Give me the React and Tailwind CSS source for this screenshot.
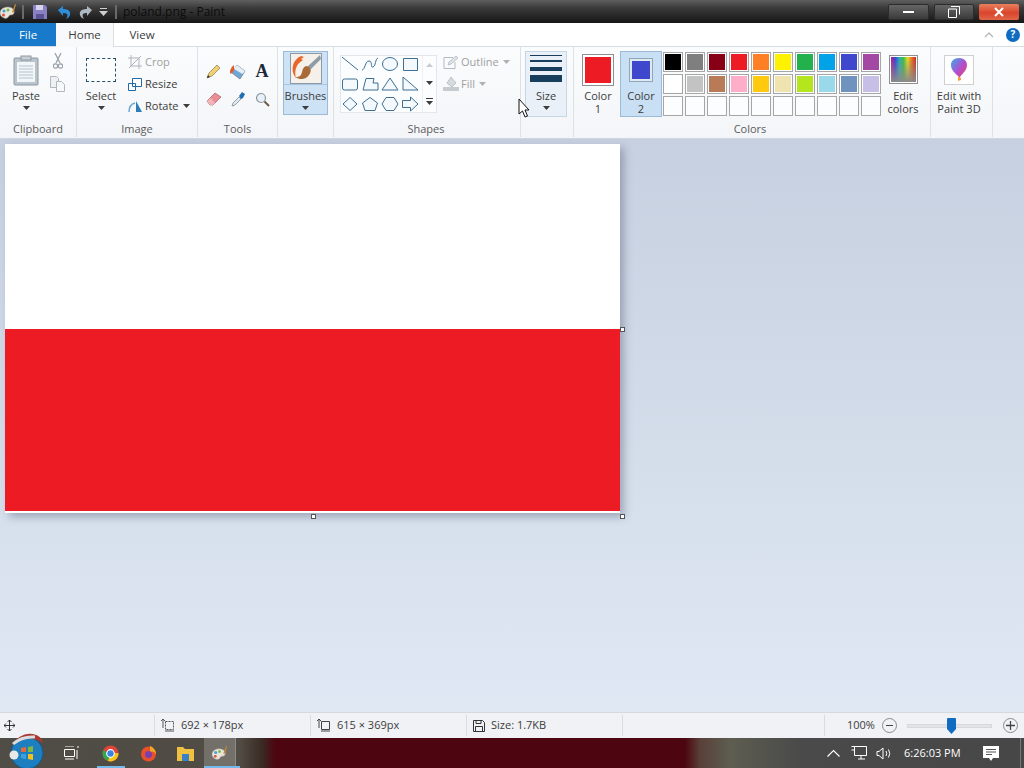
import React from 'react';

const row1 = ['#000000', '#7f7f7f', '#880015', '#ed1c24', '#ff7f27', '#fff200', '#22b14c', '#00a2e8', '#3f48cc', '#a349a4'];
const row2 = ['#ffffff', '#c3c3c3', '#b97a57', '#ffaec9', '#ffc90e', '#efe4b0', '#b5e61d', '#99d9ea', '#7092be', '#c8bfe7'];
const row3 = Array(10).fill('transparent');

function Caret({ color = '#3c3c3c' }) {
  return (
    <svg width="7" height="4" viewBox="0 0 7 4" className="shrink-0">
      <path d="M0 0h7L3.5 4z" fill={color} />
    </svg>
  );
}

function PaletteIcon({ size = 18 }) {
  return (
    <svg width={size} height={size} viewBox="0 0 18 18">
      <path d="M1 10c0-4 4-6 8-6s7 3 6 6-4 1-5 3-3 3-5 2-4-2-4-5z" fill="#e8e4d8" stroke="#9a9484" strokeWidth=".6" />
      <circle cx="5" cy="8" r="1.6" fill="#4a9fd8" />
      <circle cx="9" cy="7" r="1.5" fill="#6dbb4b" />
      <circle cx="4.500" cy="12" r="1.500" fill="#d9534f" />
      <path d="M13 9l3-8 1 .5-2.500 8z" fill="#c98a3a" />
    </svg>
  );
}

function Shape({ d }) {
  return (
    <svg width="20" height="20" viewBox="0 0 20 20">
      <path d={d} fill="#f4f9fd" stroke="#3f6f92" strokeWidth="1" strokeLinejoin="round" />
    </svg>
  );
}

const shapes = [
  'M2 3L18 16',
  'M2 16C5 16 5 7 9 7S10 14 13 13 15 5 18 4',
  'M2.500 10a7.500 6.500 0 1 0 15 0a7.500 6.500 0 1 0-15 0z',
  'M3.500 4.500h14v12h-14z',
  'M2.500 7q0-2 2-2h11q2 0 2 2v7q0 2-2 2h-11q-2 0-2-2z',
  'M3 16L6 4.500h8l-1 4.500h5v7z',
  'M10 4L18 16H2z',
  'M3 3L18 16H3z',
  'M10 3.500L17 10 10 16.500 3 10z',
  'M10 3.500L17.500 9 15 16.500H5L2.500 9z',
  'M6 3.500h8L18 10l-4 6.500H6L2 10z',
  'M2.500 6.500h8V3L18 10l-7.500 7v-3.500h-8z',
];

function BigButton({ width, children, lines, caret }) {
  return (
    <div className="flex flex-col items-center pt-[8px]" style={{ width }}>
      <div className="h-[30px] w-full flex items-center justify-center">{children}</div>
      <div className="mt-[4px] text-center leading-[13px] whitespace-nowrap">
        {lines.map((l) => (
          <div key={l}>{l}</div>
        ))}
      </div>
      {caret && (
        <div className="mt-[4px]">
          <Caret />
        </div>
      )}
    </div>
  );
}

function Group({ label, width, labelPad = 0, children }) {
  return (
    <div className="flex flex-col shrink-0 h-[90px] border-r border-[#dde1e6]" style={{ width }}>
      <div className="h-[76px] flex">{children}</div>
      <div className="h-[14px] mt-[-1px] text-center leading-[14px] text-[#5c5c5c]" style={{ paddingRight: labelPad }}>
        {label}
      </div>
    </div>
  );
}

function SmallRow({ icon, text, dim, caret }) {
  return (
    <div className={`h-[22px] flex items-center gap-[2px] whitespace-nowrap ${dim ? 'text-[#a0a0a0]' : ''}`}>
      <span className="w-[16px] h-[16px] flex items-center justify-center">{icon}</span>
      {text}
      {caret && <span className="ml-[2px]"><Caret color={dim ? '#b0b0b0' : '#3c3c3c'} /></span>}
    </div>
  );
}

function Tool({ children }) {
  return <div className="w-[24px] h-[28px] flex items-center justify-center">{children}</div>;
}

function Swatch({ color }) {
  return (
    <div className="w-[20px] h-[20px] border border-[#a6a6a6] p-[1px] bg-white/70">
      <div className="w-full h-full" style={{ background: color }} />
    </div>
  );
}

function Handle() {
  return <div className="absolute w-[5px] h-[5px] bg-white border border-[#555]" />;
}

function StatusCell({ width, children }) {
  return (
    <div className="h-[21px] flex items-center gap-[6px] border-r border-[#d9dce0] pl-[6px] shrink-0" style={{ width }}>
      {children}
    </div>
  );
}

export default function App() {
  return (
    <div
      className="w-[1024px] h-[768px] flex flex-col overflow-hidden text-[11px] text-[#3c3c3c] relative"
      style={{ fontFamily: '"Open Sans", "Noto Sans", sans-serif' }}
    >
      {/* title bar */}
      <div className="h-[23px] shrink-0 flex items-center bg-[linear-gradient(to_bottom,#5f5f5f,#3a3a3a_35%,#161616)]">
        <div className="w-[18px] ml-[-1px] flex"><PaletteIcon /></div>
        <div className="w-[2px] h-[14px] bg-[#6a6a6a] ml-[5px]" />
        <svg width="16" height="16" viewBox="0 0 16 16" className="ml-[8px]">
          <path d="M1 1h12l2 2v12H1z" fill="#8a80c4" />
          <path d="M4 1h7v5H4z" fill="#d8d4ee" />
          <path d="M4 10h8v5H4z" fill="#5a5294" />
        </svg>
        <svg width="16" height="16" viewBox="0 0 16 16" className="ml-[8px]">
          <path d="M2 6l5-4v3c5 0 8 2 7 6-.5 2-2 3-4 4 1-2 2-3 1-5-1-1-2-1-4-1v3z" fill="#2e8fd8" />
        </svg>
        <svg width="16" height="16" viewBox="0 0 16 16" className="ml-[6px]">
          <path d="M14 6L9 2v3C4 5 1 7 2 11c.5 2 2 3 4 4-1-2-2-3-1-5 1-1 2-1 4-1v3z" fill="#aeb8c0" />
        </svg>
        <svg width="9" height="8" viewBox="0 0 9 8" className="ml-[5px]">
          <path d="M1 0h7v1H1zM0 3h9L4.500 8z" fill="#cfcfcf" />
        </svg>
        <div className="w-[2px] h-[14px] bg-[#6a6a6a] ml-[7px]" />
        <div className="ml-[6px] text-[12px] text-[#0c0c0c]">poland.png - Paint</div>
        <div className="ml-auto flex gap-[5px] pr-[5px] h-[16px]">
          <div className="w-[41px] border border-[#2c2c2c] rounded-[2px] bg-[linear-gradient(to_bottom,#666,#3a3a3a)] flex items-center justify-center">
            <div className="w-[11px] h-[2px] bg-white" />
          </div>
          <div className="w-[40px] border border-[#2c2c2c] rounded-[2px] bg-[linear-gradient(to_bottom,#666,#3a3a3a)] flex items-center justify-center">
            <svg width="12" height="12" viewBox="0 0 12 12">
              <path d="M3 .5h8.500v8M.5 3h8v8.500h-8z" fill="none" stroke="#fff" strokeWidth="1" />
            </svg>
          </div>
          <div className="w-[40px] rounded-[2px] bg-[linear-gradient(to_bottom,#e9805f,#d9452c_55%,#e0664a)] flex items-center justify-center">
            <svg width="10" height="10" viewBox="0 0 10 10">
              <path d="M1 1l8 8M9 1l-8 8" stroke="#fff" strokeWidth="2" />
            </svg>
          </div>
        </div>
      </div>

      {/* tabs */}
      <div className="h-[24px] shrink-0 flex bg-white border-b border-[#d9dde2] text-[11.500px]">
        <div className="w-[56px] h-[23px] bg-[#1979ca] text-white flex items-center justify-center">File</div>
        <div className="w-[58px] h-[24px] bg-[#f8f9fa] border-r border-[#d9dde2] flex items-center justify-center">Home</div>
        <div className="w-[56px] flex items-center justify-center">View</div>
        <div className="ml-auto flex items-center gap-[12px] pr-[4px]">
          <svg width="10" height="6" viewBox="0 0 10 6">
            <path d="M1 5l4-4 4 4" fill="none" stroke="#b4b8bd" strokeWidth="1.300" />
          </svg>
          <div className="w-[14px] h-[14px] rounded-full bg-[#0f6cc0] text-white text-[10px] font-bold flex items-center justify-center">?</div>
        </div>
      </div>

      {/* ribbon */}
      <div className="h-[91px] shrink-0 flex bg-[linear-gradient(to_bottom,#fbfcfd,#f3f5f8)]">
        <Group label="Clipboard" width={77}>
          <div className="ml-[12px]">
            <BigButton width={28} lines={['Paste']} caret>
              <svg width="26" height="31" viewBox="0 0 26 31">
                <rect x="1" y="3" width="24" height="27" rx="1" fill="#b9c4cd" stroke="#8e99a3" />
                <rect x="4" y="7" width="18" height="20" fill="#f3f6f8" />
                <path d="M6 11h14M6 14h14M6 17h14M6 20h14M6 23h14" stroke="#b5c2cd" />
                <rect x="8" y="1" width="10" height="4" fill="#c8ced4" stroke="#8e99a3" />
              </svg>
            </BigButton>
          </div>
          <div className="ml-[10px] flex flex-col items-center pt-[6px] gap-[7px]">
            <svg width="10" height="16" viewBox="0 0 10 16">
              <path d="M2 0l5 10M8 0L3 10" stroke="#9aa3aa" strokeWidth="1.300" />
              <circle cx="2.500" cy="13" r="2.200" fill="none" stroke="#9aa3aa" strokeWidth="1.200" />
              <circle cx="7.500" cy="13" r="2.200" fill="none" stroke="#9aa3aa" strokeWidth="1.200" />
            </svg>
            <svg width="15" height="16" viewBox="0 0 15 16">
              <path d="M.5.500h6l2 2v9h-8z" fill="#eef1f4" stroke="#b0b8bf" />
              <path d="M6.500 5.500h5l3 3v7h-8z" fill="#f6f8fa" stroke="#b0b8bf" />
            </svg>
          </div>
        </Group>

        <Group label="Image" width={121}>
          <div className="ml-[9px]">
            <BigButton width={30} lines={['Select']} caret>
              <div className="w-[30px] h-[24px] border border-dashed border-[#24506e] bg-white/60" />
            </BigButton>
          </div>
          <div className="ml-[11px] flex flex-col pt-[4px]">
            <SmallRow
              dim
              text="Crop"
              icon={
                <svg width="14" height="14" viewBox="0 0 14 14">
                  <path d="M3 0v11h11M0 3h11v11M1 13L13 1" fill="none" stroke="#adb4ba" />
                </svg>
              }
            />
            <SmallRow
              text="Resize"
              icon={
                <svg width="14" height="13" viewBox="0 0 14 13">
                  <path d="M4.500.500h9v8h-9zM.5 5.500h7v7h-7z" fill="#fff" stroke="#1f6aa8" />
                </svg>
              }
            />
            <SmallRow
              text="Rotate"
              caret
              icon={
                <svg width="15" height="13" viewBox="0 0 15 13">
                  <path d="M8 1l6 11H8z" fill="#2e7cb8" />
                  <path d="M1 12C1 7 3 4 7 3" fill="none" stroke="#6fa8d0" strokeWidth="1.500" />
                </svg>
              }
            />
          </div>
        </Group>

        <Group label="Tools" width={80}>
          <div className="ml-[4px] mt-[10px] w-[72px] h-[56px] flex flex-wrap content-start">
            <Tool>
              <svg width="16" height="16" viewBox="0 0 16 16">
                <path d="M1 15l2-5 8-8 3 3-8 8z" fill="#efd074" stroke="#8c7a3c" strokeWidth=".7" />
                <path d="M1 15l1-3 2 2z" fill="#333" />
              </svg>
            </Tool>
            <Tool>
              <svg width="18" height="17" viewBox="0 0 18 17">
                <path d="M8 2l8 6-5 8-8-6z" fill="#6fa7d6" stroke="#6a7680" strokeWidth=".7" />
                <path d="M8 2l8 6-2.500 3L5 6z" fill="#e6eef4" />
                <path d="M5 2C1 5 0 10 2 11l3-4z" fill="#e35a2a" />
              </svg>
            </Tool>
            <Tool>
              <span className="text-[18px] font-bold leading-none text-[#1b2a3a]" style={{ fontFamily: '"Liberation Serif", serif' }}>A</span>
            </Tool>
            <Tool>
              <svg width="16" height="14" viewBox="0 0 16 14">
                <path d="M1 9l8-8 6 4-8 8H4z" fill="#ea8c93" stroke="#a85f66" strokeWidth=".7" />
                <path d="M1 9l3 4h3l2-2-4-5z" fill="#f1b4b9" />
              </svg>
            </Tool>
            <Tool>
              <svg width="15" height="16" viewBox="0 0 15 16">
                <path d="M1 15l1-3 6-6 2 2-6 6z" fill="#dfe8ee" stroke="#6f8290" strokeWidth=".7" />
                <path d="M8 5l3-4 3 2-2 4-2 1z" fill="#1f6fb0" />
              </svg>
            </Tool>
            <Tool>
              <svg width="15" height="15" viewBox="0 0 15 15">
                <circle cx="6" cy="6" r="4.500" fill="#e8f1f7" stroke="#8c979f" strokeWidth="1.200" />
                <path d="M9.500 9.500L14 14" stroke="#6c5a48" strokeWidth="2" />
              </svg>
            </Tool>
          </div>
        </Group>

        <Group label="" width={56}>
          <div className="ml-[5px] mt-[4px] w-[45px] h-[64px] border border-[#9cbbd8] bg-[#cde2f5] flex flex-col items-center">
            <div className="w-[43px] h-[33px] flex items-center justify-center border-b border-[#a9c5de]">
              <svg width="32" height="31" viewBox="0 0 32 31">
                <rect x=".5" y=".5" width="31" height="30" fill="#f5f0ea" stroke="#8a9aa8" />
                <path d="M30 2L17 14l3 3L31 6z" fill="#8f9ca6" />
                <path d="M16 13c5 1 6 5 3 9-3 5-9 5-14 2 5 0 6-1 7-5s2-5 4-6z" fill="#a86a38" />
                <path d="M11 3C2 7 0 18 6 25c-2-7 0-14 7-18l-2-1 3-2z" fill="#e8662a" />
              </svg>
            </div>
            <div className="mt-[4px] leading-[13px]">Brushes</div>
            <div className="mt-[4px]"><Caret /></div>
          </div>
        </Group>

        <Group label="Shapes" width={187} labelPad={2}>
          <div className="ml-[6px] mt-[8px] w-[97px] h-[58px] bg-[#fbfdfe] border border-[#e3e7ec] flex">
            <div className="w-[82px] ml-[-1px] mt-[-2px] grid grid-cols-[repeat(4,20px)] content-start">
              {shapes.map((d, i) => (
                <Shape key={i} d={d} />
              ))}
            </div>
            <div className="flex-1 flex flex-col items-center justify-between py-[7px] border-l border-[#eef1f4]">
              <svg width="7" height="4" viewBox="0 0 7 4"><path d="M0 4h7L3.500 0z" fill="#c8cccf" /></svg>
              <Caret />
              <svg width="7" height="7" viewBox="0 0 7 7"><path d="M0 0h7v1H0zM0 3h7L3.500 7z" fill="#3c3c3c" /></svg>
            </div>
          </div>
          <div className="ml-[6px] mt-[4px]">
            <SmallRow
              dim
              text="Outline"
              caret
              icon={
                <svg width="16" height="14" viewBox="0 0 16 14">
                  <path d="M1 2.500h9M1 2.500v11h11V7" fill="none" stroke="#b4bbc0" />
                  <path d="M5 10l1-3 7-6 2 2-7 6z" fill="#dfe4e8" stroke="#aab2b8" strokeWidth=".7" />
                </svg>
              }
            />
            <SmallRow
              dim
              text="Fill"
              caret
              icon={
                <svg width="16" height="14" viewBox="0 0 16 14">
                  <path d="M8 0l5 6-4 4-5-4z" fill="#d6dbdf" stroke="#a9b0b6" strokeWidth=".7" />
                  <rect x="0" y="10" width="16" height="4" fill="#c5cbd0" />
                </svg>
              }
            />
          </div>
        </Group>

        <Group label="" width={53}>
          <div className="ml-[4px] mt-[4px] w-[42px] h-[66px] border border-[#c5d6e4] bg-[#e9f0f7] flex flex-col items-center">
            <div className="w-[32px] mt-[3px] flex flex-col">
              <div className="h-px bg-[#173e5c] mb-[4px]" />
              <div className="h-[2px] bg-[#173e5c] mb-[5px]" />
              <div className="h-[4px] bg-[#173e5c] mb-[4px]" />
              <div className="h-[7px] bg-[#173e5c]" />
            </div>
            <div className="mt-[7px] leading-[13px]">Size</div>
            <div className="mt-[4px]"><Caret /></div>
          </div>
        </Group>

        <Group label="Colors" width={357} labelPad={4}>
          <div className="ml-[5px] w-[38px] flex flex-col items-center pt-[7px]">
            <div className="w-[32px] h-[32px] border border-[#8f8f8f] p-[2px] bg-white">
              <div className="w-full h-full bg-[#ed1c24]" />
            </div>
            <div className="mt-[3px] text-center leading-[13px]">Color<br />1</div>
          </div>
          <div className="ml-[3px] mt-[4px] w-[42px] h-[66px] border border-[#9cbbd8] bg-[#c9dff3] flex flex-col items-center pt-[6px]">
            <div className="w-[24px] h-[24px] border border-[#8fa5b8] p-[2px] bg-[#dfe9f2]">
              <div className="w-full h-full bg-[#3f48cc]" />
            </div>
            <div className="mt-[7px] text-center leading-[13px]">Color<br />2</div>
          </div>
          <div className="ml-px mt-[5px] grid grid-cols-[repeat(10,20px)] gap-[2px] content-start">
            {[...row1, ...row2, ...row3].map((c, i) => (
              <Swatch key={i} color={c} />
            ))}
          </div>
          <div className="ml-[5px] w-[34px] flex flex-col items-center pt-[8px]">
            <div className="w-[29px] h-[29px] border border-[#8f8f8f] p-[1px] bg-white">
              <div className="w-full h-full bg-[linear-gradient(to_bottom,transparent,#8a8a8a),linear-gradient(to_right,#d0108a,#3040d8,#20b0c0,#40c040,#e8e020,#e87020,#d02020)]" />
            </div>
            <div className="mt-[5px] text-center leading-[13px]">Edit<br />colors</div>
          </div>
        </Group>

        <Group label="" width={62}>
          <div className="w-full flex flex-col items-center pt-[8px] pr-[5px]">
            <div className="w-[30px] h-[30px] border border-[#d0d0d0] bg-white flex items-center justify-center">
              <svg width="18" height="26" viewBox="0 0 18 26">
                <defs>
                  <linearGradient id="balloon" x1="0" y1="0" x2="1" y2="1">
                    <stop offset="0" stopColor="#30b0e8" />
                    <stop offset=".5" stopColor="#b050d0" />
                    <stop offset="1" stopColor="#f04060" />
                  </linearGradient>
                </defs>
                <path d="M9 1c5 0 8 3 8 7 0 5-4 8-7 12l1 3-3-1 1-2C5 16 1 13 1 8c0-4 3-7 8-7z" fill="url(#balloon)" />
                <path d="M8 20l2 0 1 3-3 1z" fill="#f0a030" />
              </svg>
            </div>
            <div className="mt-[4px] text-center leading-[13px] whitespace-nowrap">Edit with<br />Paint 3D</div>
          </div>
        </Group>
      </div>

      {/* canvas area */}
      <div className="flex-1 min-h-0 bg-[linear-gradient(to_bottom,#c6d0e0,#dfe8f3)] pl-[5px] pt-[5px] border-t border-[#cfd6df]">
        <div className="relative w-[615px] shadow-[4px_4px_8px_rgba(90,100,125,0.45)]">
          <div className="h-[185px] bg-white" />
          <div className="h-[182px] bg-[#ed1c24]" />
          <div className="h-[2px] bg-white" />
          <div className="absolute left-[615px] top-[183px]"><Handle /></div>
          <div className="absolute left-[306px] top-[370px]"><Handle /></div>
          <div className="absolute left-[615px] top-[370px]"><Handle /></div>
        </div>
      </div>

      {/* status bar */}
      <div className="h-[26px] shrink-0 flex items-center bg-[#f0f2f5] border-t border-[#d5d9de] text-[#3c3c3c]">
        <StatusCell width={155}>
          <svg width="11" height="11" viewBox="0 0 11 11" className="ml-[-2px]">
            <path d="M5.500 0v11M0 5.500h11M3.500 2l2-2 2 2M3.500 9l2 2 2-2M2 3.500l-2 2 2 2M9 3.500l2 2-2 2" fill="none" stroke="#333" />
          </svg>
        </StatusCell>
        <StatusCell width={156}>
          <svg width="14" height="13" viewBox="0 0 14 13">
            <path d="M4.500 2.500h8v8h-8z" fill="none" stroke="#555" strokeDasharray="2 1" />
            <path d="M2 0v9M0 2l2-2 2 2M4 12h9" fill="none" stroke="#555" />
          </svg>
          692 × 178px
        </StatusCell>
        <StatusCell width={156}>
          <svg width="14" height="13" viewBox="0 0 14 13">
            <path d="M4.500 2.500h8v8h-8z" fill="none" stroke="#444" />
            <path d="M2 0v9M0 2l2-2 2 2M4 12h9" fill="none" stroke="#444" />
          </svg>
          615 × 369px
        </StatusCell>
        <StatusCell width={156}>
          <svg width="12" height="12" viewBox="0 0 12 12">
            <path d="M.5.500h9l2 2v9H.5zM3 .5v3h5v-3M2.500 11.500v-5h7v5" fill="none" stroke="#333" />
          </svg>
          Size: 1.7KB
        </StatusCell>
        <StatusCell width={202} />
        <div className="flex items-center pl-[22px]">
          <span className="w-[29px] whitespace-nowrap">100%</span>
          <div className="ml-[6px] w-[15px] h-[15px] rounded-full border border-[#8a8a8a] flex items-center justify-center">
            <div className="w-[7px] h-[1.500px] bg-[#444]" />
          </div>
          <div className="ml-[10px] w-[85px] h-[4px] bg-[#e2e4e7] border border-[#d6d8db] relative flex items-center">
            <svg width="11" height="16" viewBox="0 0 11 16" className="absolute left-[38px] top-[-7px]">
              <path d="M1 1q0-1 1-1h7q1 0 1 1v10l-4.500 5L1 11z" fill="#0f6cc0" />
            </svg>
          </div>
          <div className="ml-[11px] w-[15px] h-[15px] rounded-full border border-[#8a8a8a] flex items-center justify-center">
            <svg width="9" height="9" viewBox="0 0 9 9"><path d="M4.500 0v9M0 4.500h9" stroke="#444" strokeWidth="1.300" /></svg>
          </div>
        </div>
      </div>

      {/* taskbar */}
      <div className="h-[30px] shrink-0 flex items-center relative text-white bg-[linear-gradient(to_right,#4f4d46_0,#514c44_240px,#3a2a24_262px,#4d0610_275px,#4d0610_685px,#5a4038_700px,#5d5d50_730px,#4a4a4a_800px,#474747_100%)]">
        <div className="w-[60px] h-full" />
        <div className="w-[24px] flex justify-center">
          <svg width="16" height="14" viewBox="0 0 16 14">
            <path d="M.5 3.500h10v7H.5zM1 0h9M1 13h9M13 1h2M13 4v9" fill="none" stroke="#fff" />
          </svg>
        </div>
        <div className="w-[39px] ml-[7px] h-full flex items-center justify-center">
          <svg width="17" height="17" viewBox="0 0 17 17">
            <circle cx="8.500" cy="8.500" r="8" fill="#e0453a" />
            <path d="M8.500 8.500L1.200 5.200A8 8 0 0 0 6 16z" fill="#2fa84f" />
            <path d="M8.500 8.500L6 16A8 8 0 0 0 16.500 8z" fill="#f5c518" />
            <circle cx="8.500" cy="8.500" r="3.800" fill="#3b82e0" stroke="#fff" strokeWidth="1.200" />
          </svg>
        </div>
        <div className="w-[37px] h-full flex items-center justify-center">
          <svg width="17" height="17" viewBox="0 0 17 17">
            <circle cx="8.500" cy="9" r="7.500" fill="#e8502a" />
            <path d="M10 1c3 1 6 4 6 8-2-3-4-3-6-2z" fill="#f5a623" />
            <circle cx="8.500" cy="9.500" r="3.500" fill="#7b3fb0" />
          </svg>
        </div>
        <div className="w-[37px] h-full flex items-center justify-center">
          <svg width="17" height="15" viewBox="0 0 17 15">
            <path d="M0 1h6l2 2h9v12H0z" fill="#f0c040" />
            <rect x="5" y="8" width="7" height="7" fill="#3a80c8" />
          </svg>
        </div>
        <div className="w-[32px] h-full flex items-center justify-center bg-white/20 border-r border-white/20">
          <PaletteIcon size={17} />
        </div>

        <div className="ml-auto flex items-center">
          <svg width="13" height="8" viewBox="0 0 13 8">
            <path d="M.5 7.500l6-6 6 6" fill="none" stroke="#fff" strokeWidth="1.200" />
          </svg>
          <svg width="16" height="14" viewBox="0 0 16 14" className="ml-[11px]">
            <path d="M3.500.500h12v9h-12zM.5.500h3M.5 4h3M7 13h7M10 10v3" fill="none" stroke="#fff" />
          </svg>
          <svg width="16" height="13" viewBox="0 0 16 13" className="ml-[9px]">
            <path d="M1 4.500h2L7 1v11L3 8.500H1zM10 4q1.500 2.500 0 5M12.500 2.500q2.500 4 0 8" fill="none" stroke="#fff" />
          </svg>
          <div className="ml-[12px] w-[58px] text-[11px] whitespace-nowrap">6:26:03 PM</div>
          <svg width="16" height="15" viewBox="0 0 16 15" className="ml-[21px]">
            <path d="M0 0h16v12h-6l-2 3-2-3H0z" fill="#fff" />
            <path d="M3 3.500h10M3 6h10M3 8.500h6" stroke="#555" />
          </svg>
          <div className="w-[3px] h-[30px] ml-[19px] mr-[3px] border-r border-[#777]" />
        </div>

        {/* start orb sits over the bar and the status strip */}
        <svg width="38" height="38" viewBox="0 0 38 38" className="absolute left-[8px] top-[-7px]">
          <circle cx="19" cy="22" r="16" fill="#1e7fc0" />
          <circle cx="19" cy="22" r="16" fill="none" stroke="#0f5a8c" />
          <path d="M13 17l5-1v5h-5z" fill="#e8683a" />
          <path d="M20 16l5-1v6h-5z" fill="#7cb83e" />
          <path d="M13 23h5v5l-5-1z" fill="#3aa0e0" />
          <path d="M20 23h5v6l-5-1z" fill="#f4c020" />
          <path d="M5 14Q12 1 25 3q9 2 10 9-10-6-18-4T5 14z" fill="#a83a34" />
          <path d="M5 13Q14 5 27 6" fill="none" stroke="#dcdcdc" strokeWidth="3" />
          <circle cx="6" cy="24" r="4.500" fill="#e8e8e8" />
        </svg>
        <div className="absolute bottom-0 left-[97px] w-[28px] h-[2px] bg-[#76b9ed]" />
        <div className="absolute bottom-0 left-[204px] w-[36px] h-[2px] bg-[#76b9ed]" />
      </div>

      {/* mouse cursor */}
      <svg width="13" height="20" viewBox="0 0 13 20" className="absolute left-[518px] top-[98px]">
        <path d="M1 1v15l3.500-3 2.500 6 2.500-1-2.500-6H11z" fill="#fff" stroke="#111" strokeWidth="1" strokeLinejoin="round" />
      </svg>
    </div>
  );
}
